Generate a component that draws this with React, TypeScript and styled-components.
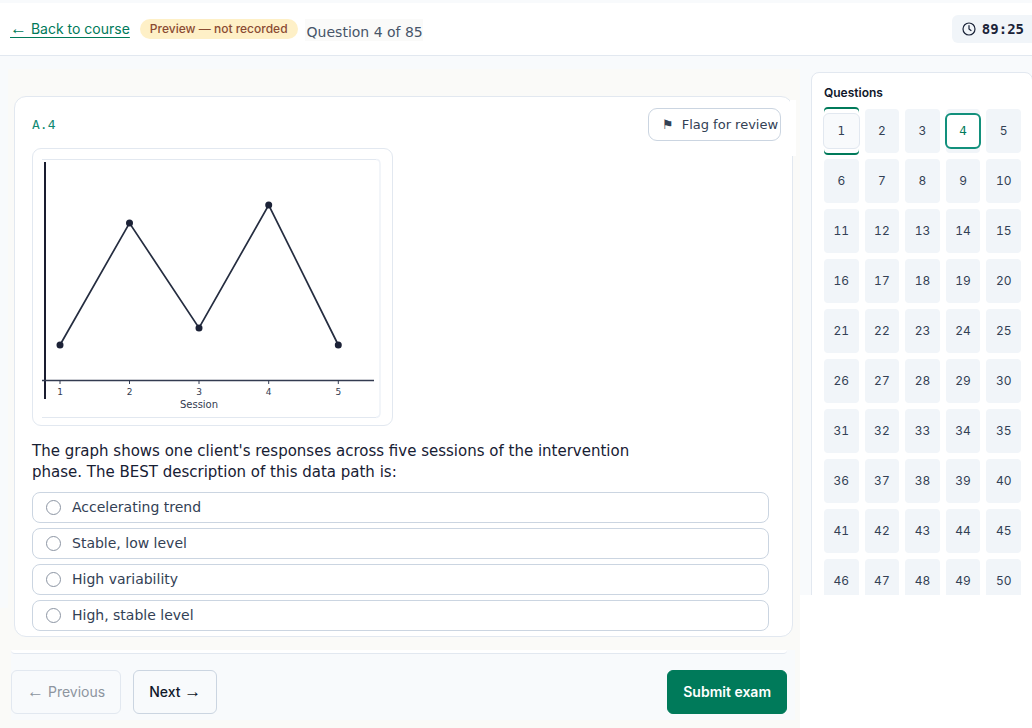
import React, { useState } from "react";
import styled, { createGlobalStyle, css } from "styled-components";

const inter = `Inter, "Liberation Sans", sans-serif`;
const dejavu = `"DejaVu Sans", sans-serif`;

const GlobalStyle = createGlobalStyle`
  *, *::before, *::after { box-sizing: border-box; }
  body { margin: 0; background: #ffffff; color: #0f172a; font-family: ${inter}; }
  button { font: inherit; cursor: pointer; }
`;

const Page = styled.div`
  display: flex;
  flex-direction: column;
  min-height: 100vh;
`;

const Header = styled.header`
  display: flex;
  align-items: center;
  height: 56px;
  padding-left: 10px;
  background: #ffffff;
  border-top: 3px solid #f8fafc;
  border-bottom: 1px solid #e2e8f0;
`;

const Arrow = styled.span`
  font-family: "Liberation Serif", serif;
  font-size: 17px;
  font-weight: 400;
  line-height: 1;
`;

const BackLink = styled.a`
  margin-right: 10px;
  font-size: 14px;
  line-height: 20px;
  color: #007a5a;
  text-decoration: underline;
  text-underline-offset: 3px;
`;

const PreviewBadge = styled.span`
  padding: 0 10px;
  border-radius: 10px;
  background: #fef0c7;
  color: #8a4b32;
  font-size: 12px;
  font-weight: 500;
  line-height: 20px;
`;

const Progress = styled.span`
  margin: 2px 0 0 7px;
  padding: 4px 0 0 2px;
  background: #fafaf9;
  color: #475569;
  font-family: ${dejavu};
  font-size: 14px;
  line-height: 18px;
`;

const Timer = styled.time`
  display: flex;
  align-items: center;
  gap: 6px;
  height: 28px;
  margin-left: auto;
  padding: 0 8px 0 10px;
  border-radius: 6px 0 0 6px;
  background: #f1f5f9;
  color: #1a2338;
  font-family: "DejaVu Sans Mono", monospace;
  font-size: 14px;
  font-weight: 700;
`;

const Body = styled.div`
  display: flex;
  align-items: flex-start;
  flex: 1;
`;

const Main = styled.main`
  display: flex;
  flex-direction: column;
  flex: 1;
  align-self: stretch;
  min-width: 0;
  padding: 40px 5px 8px 11px;
  background:
    linear-gradient(#f8fafc, #f8fafc) 0 0 / 8px 552px no-repeat,
    linear-gradient(#f8fafc, #f8fafc) 0 0 / 100% 13px no-repeat,
    #fafaf8;
`;

const Card = styled.article`
  position: relative;
  display: flex;
  flex-direction: column;
  margin: 0 2px 0 3px;
  padding: 11px 23px 5px 17px;
  border: 1px solid #e2e8f0;
  border-radius: 12px;
  background: #ffffff;

  &::after {
    content: "";
    position: absolute;
    top: 3px;
    right: -4px;
    width: 6px;
    height: 56px;
    background: #ffffff;
  }
`;

const CardHead = styled.div`
  display: flex;
  align-items: center;
  justify-content: space-between;
  height: 33px;
  margin: 0 -12px 7px 0;
`;

const Code = styled.span`
  color: #0f8a72;
  font-family: "DejaVu Sans Mono", monospace;
  font-size: 13px;
`;

const FlagButton = styled.button`
  display: flex;
  align-items: center;
  gap: 8px;
  width: 133px;
  height: 33px;
  padding: 0 0 0 13px;
  border: 1px solid #cbd5e1;
  border-radius: 9px;
  background: #ffffff;
  color: #334155;
  font-family: ${dejavu};
  font-size: 13px;
  white-space: nowrap;
`;

const Figure = styled.figure`
  align-self: flex-start;
  margin: 0 0 15px;
  border: 1px solid #e2e8f0;
  border-radius: 9px;

  svg { display: block; }
`;

const Question = styled.legend`
  max-width: 640px;
  margin-bottom: 9px;
  padding: 0;
  color: #172033;
  font-family: ${dejavu};
  font-size: 15px;
  line-height: 21px;
`;

const Answers = styled.fieldset`
  min-width: 0;
  margin: 0;
  padding: 0;
  border: 0;
`;

const Options = styled.div`
  display: flex;
  flex-direction: column;
  gap: 5px;
`;

const Option = styled.label`
  display: flex;
  align-items: center;
  gap: 11px;
  height: 31px;
  padding: 0 13px 2px;
  border: 1px solid #cbd5e1;
  border-radius: 8px;
  color: #334155;
  font-family: ${dejavu};
  font-size: 14px;
  line-height: 20px;
`;

const Radio = styled.input`
  appearance: none;
  width: 15px;
  height: 15px;
  margin: 1px 0 0;
  border: 1px solid #8c95a3;
  border-radius: 50%;

  &:checked { border: 5px solid #007a5a; }
`;

const FooterArea = styled.div`
  margin-top: 13px;
  padding: 0 8px 6px 0;
  background: #f8fafc;
`;

const FooterEdge = styled.div`
  height: 4px;
  border-bottom: 1px solid #e2e8f0;
  border-radius: 0 0 8px 8px;
  background: #ffffff;
`;

const Actions = styled.div`
  display: flex;
  gap: 12px;
  padding: 16px 0 0;
`;

const ActionButton = styled.button<{ $primary?: boolean }>`
  height: 44px;
  padding: 0 15px 2px;
  border: 1px solid #cbd5e1;
  border-radius: 6px;
  background: #f8fafc;
  color: #0f172a;
  font-size: 14px;
  font-weight: 500;

  &:disabled {
    border-color: #e2e8f0;
    color: #8d959f;
    font-weight: 400;
    cursor: default;
  }

  ${(p) =>
    p.$primary &&
    css`
      margin-left: auto;
      border-color: #007a5a;
      background: #007a5a;
      color: #ffffff;
      font-weight: 600;
    `}
`;

const Sidebar = styled.aside`
  flex: 0 0 232px;
  height: 539px;
  padding: 16px 0 0 11px;
  background: #f8fafc;
  overflow: hidden;
`;

const Palette = styled.nav`
  width: 222px;
  padding: 12px 11px 0 12px;
  border: 1px solid #e2e8f0;
  border-radius: 8px;
  background: #ffffff;
`;

const PaletteTitle = styled.h2`
  margin: 0 0 8px;
  font-size: 12px;
  font-weight: 600;
  line-height: 16px;
`;

const PaletteGrid = styled.div`
  display: grid;
  grid-template-columns: repeat(5, 1fr);
  gap: 6px;
`;

const Cell = styled.button<{ $state?: "first" | "current" }>`
  position: relative;
  height: 44px;
  padding: 0 0 2px;
  border: 0;
  border-radius: 4px;
  background: #f1f5f9;
  color: #334155;
  font-size: 12px;
  font-variant-numeric: tabular-nums;

  ${(p) =>
    p.$state === "first" &&
    css`
      background: #ffffff;
      box-shadow: 0 -2px 0 #007a5a, 0 2px 0 #007a5a;
    `}
`;

const Marker = styled.span<{ $current: boolean }>`
  position: absolute;
  inset: 4px -1px;
  display: flex;
  align-items: center;
  justify-content: center;
  border: ${(p) => (p.$current ? "2px solid #12907c" : "1px solid #e2e8f0")};
  border-radius: 6px;
  background: ${(p) => (p.$current ? "#ffffff" : "#f8fafc")};
  color: ${(p) => (p.$current ? "#007a5a" : "#334155")};
  font-family: ${dejavu};
  font-size: 12px;
`;

const points = [
  [27, 196],
  [96.5, 74],
  [166, 179],
  [235.7, 56],
  [305.3, 196],
];

function Chart() {
  return (
    <svg width="359" height="276" viewBox="0 0 359 276" role="img" aria-label="Responses by session">
      <path d="M9 10.5H343" stroke="#e2e8f0" fill="none" />
      <path d="M343 10.5Q347 10.5 347 15V264Q347 268 343 268.5" stroke="#eef2f8" strokeWidth="1.5" fill="none" />
      <path d="M9 268.5H343" stroke="#e2e8f0" />
      <path d="M12 13V250" stroke="#1a1d30" strokeWidth="2" />
      <path d="M9 231.5H341" stroke="#333b50" strokeWidth="1.3" />
      <polyline points={points.map((p) => p.join(",")).join(" ")} fill="none" stroke="#252d40" strokeWidth="1.7" />
      {points.map(([x, y], i) => (
        <g key={x}>
          <circle cx={x} cy={y} r="3.5" fill="#1c2237" />
          <path d={`M${x} 231V235`} stroke="#333b50" />
          <text x={x} y="246" textAnchor="middle" fontSize="9" fontFamily="DejaVu Sans" fill="#333b50">
            {i + 1}
          </text>
        </g>
      ))}
      <text x="166" y="259" textAnchor="middle" fontSize="10" fontFamily="DejaVu Sans" fill="#333b50">
        Session
      </text>
    </svg>
  );
}

const options = ["Accelerating trend", "Stable, low level", "High variability", "High, stable level"];
const questions = Array.from({ length: 50 }, (_, i) => i + 1);

export default function App() {
  const [answer, setAnswer] = useState("");
  return (
    <Page>
      <GlobalStyle />
      <Header>
        <BackLink href="#course">
          <Arrow>←</Arrow> Back to course
        </BackLink>
        <PreviewBadge>Preview — not recorded</PreviewBadge>
        <Progress>Question 4 of 85</Progress>
        <Timer>
          <svg width="14" height="14" viewBox="0 0 14 14" fill="none" stroke="currentColor" strokeWidth="1.2" strokeLinecap="round" strokeLinejoin="round">
            <circle cx="7" cy="7" r="6" />
            <path d="M7 3.5V7L9 8.5" />
          </svg>
          89:25
        </Timer>
      </Header>
      <Body>
        <Main>
          <Card>
            <CardHead>
              <Code>A.4</Code>
              <FlagButton type="button">
                <span aria-hidden="true">⚑</span>
                Flag for review
              </FlagButton>
            </CardHead>
            <Figure>
              <Chart />
            </Figure>
            <Answers>
              <Question>
                The graph shows one client's responses across five sessions of the intervention phase. The BEST
                description of this data path is:
              </Question>
              <Options>
                {options.map((o) => (
                  <Option key={o}>
                    <Radio type="radio" name="answer" checked={answer === o} onChange={() => setAnswer(o)} />
                    {o}
                  </Option>
                ))}
              </Options>
            </Answers>
          </Card>
          <FooterArea>
            <FooterEdge />
            <Actions>
              <ActionButton type="button" disabled>
                <Arrow>←</Arrow> Previous
              </ActionButton>
              <ActionButton type="button">
                Next <Arrow>→</Arrow>
              </ActionButton>
              <ActionButton type="submit" $primary>
                Submit exam
              </ActionButton>
            </Actions>
          </FooterArea>
        </Main>
        <Sidebar>
          <Palette aria-label="Questions">
            <PaletteTitle>Questions</PaletteTitle>
            <PaletteGrid>
              {questions.map((n) => (
                <Cell key={n} type="button" $state={n === 1 ? "first" : n === 4 ? "current" : undefined}>
                  {n === 1 || n === 4 ? <Marker $current={n === 4}>{n}</Marker> : n}
                </Cell>
              ))}
            </PaletteGrid>
          </Palette>
        </Sidebar>
      </Body>
    </Page>
  );
}
